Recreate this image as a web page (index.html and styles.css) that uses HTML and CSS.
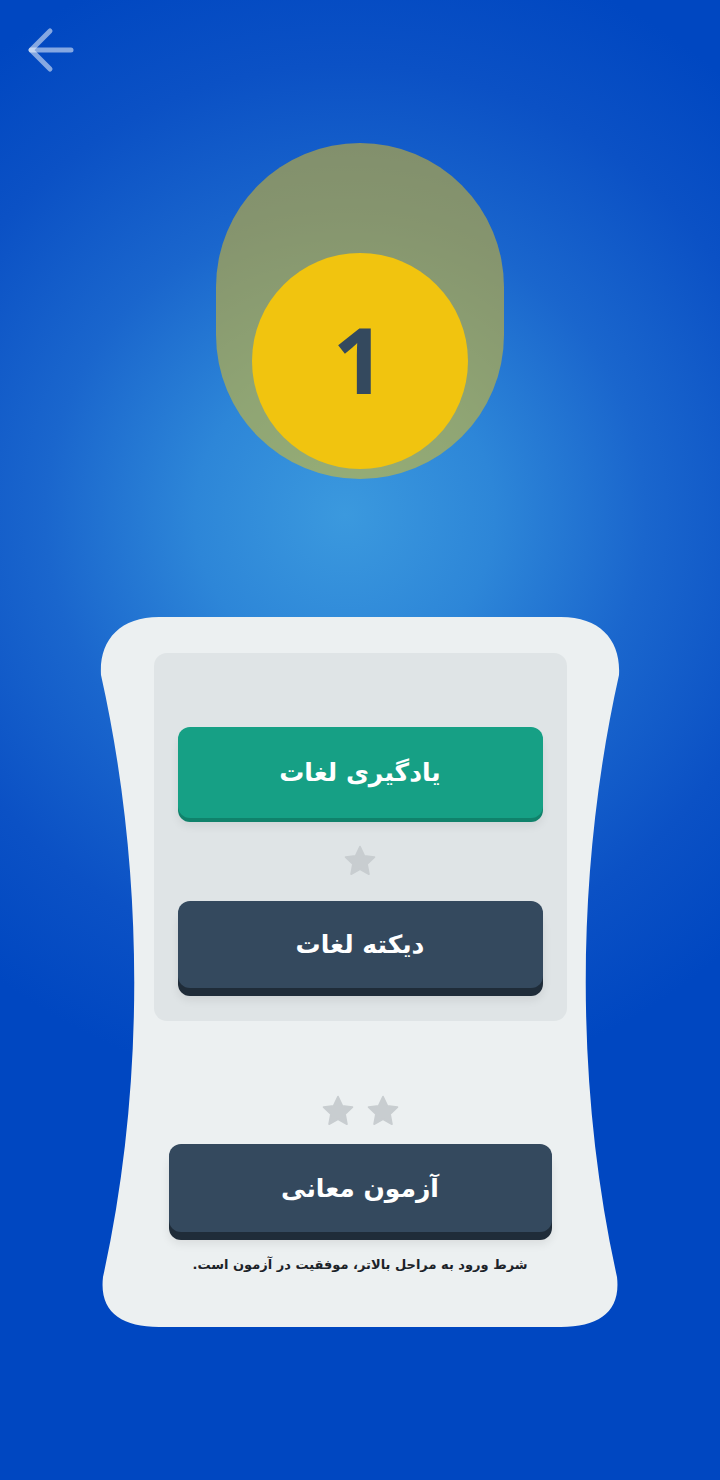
FILE: index.html
```html
<!DOCTYPE html>
<html lang="fa">
<head>
<meta charset="utf-8">
<title>مرحله ۱</title>
<link rel="stylesheet" href="styles.css">
</head>
<body>
<div class="screen">
  <header class="topbar">
    <button class="back" aria-label="بازگشت">
      <svg width="48" height="48" viewBox="0 0 48 48" fill="none" stroke="currentColor" stroke-width="5" stroke-linecap="round" stroke-linejoin="round">
        <path d="M5 24 H45"/>
        <path d="M24 5 L5 24 L24 43"/>
      </svg>
    </button>
  </header>

  <section class="badge">
    <div class="badge-disc">
      <span class="badge-num">1</span>
    </div>
  </section>

  <section class="card">
    <svg class="card-shape" width="518" height="710" viewBox="0 0 518 710" aria-hidden="true">
      <path d="M58 0 L460 0 C500 0 520 24 518 58 C474 255 474 470 516 660 C520 695 498 710 460 710 L58 710 C20 710 -2 695 2 660 C44 470 44 255 0 58 C-2 24 18 0 58 0 Z" fill="#ecf0f1"/>
    </svg>
    <div class="card-body">
      <div class="panel">
        <button class="btn btn-green">یادگیری لغات</button>
        <div class="stars stars-one">
          <svg class="star" viewBox="0 0 24 24"><path d="M12 1.8l3.1 6.6 7.1.9-5.2 4.9 1.3 7.1L12 17.8l-6.3 3.5 1.3-7.1L1.8 9.3l7.1-.9z" stroke="#c8cdd0" stroke-width="1.2" stroke-linejoin="round"/></svg>
        </div>
        <button class="btn btn-dark btn-dictation">دیکته لغات</button>
      </div>
      <div class="stars stars-two">
        <svg class="star" viewBox="0 0 24 24"><path d="M12 1.8l3.1 6.6 7.1.9-5.2 4.9 1.3 7.1L12 17.8l-6.3 3.5 1.3-7.1L1.8 9.3l7.1-.9z" stroke="#c8cdd0" stroke-width="1.2" stroke-linejoin="round"/></svg>
        <svg class="star" viewBox="0 0 24 24"><path d="M12 1.8l3.1 6.6 7.1.9-5.2 4.9 1.3 7.1L12 17.8l-6.3 3.5 1.3-7.1L1.8 9.3l7.1-.9z" stroke="#c8cdd0" stroke-width="1.2" stroke-linejoin="round"/></svg>
      </div>
      <button class="btn btn-dark btn-exam">آزمون معانی</button>
      <p class="note">شرط ورود به مراحل بالاتر، موفقیت در آزمون است.</p>
    </div>
  </section>
</div>
</body>
</html>
```

FILE: styles.css
```css
html, body {
  margin: 0;
  padding: 0;
}

body {
  width: 720px;
  height: 1480px;
  overflow: hidden;
  background: radial-gradient(circle at 345px 515px,
    #3b99de 0px,
    #2d86d8 150px,
    #1a66cd 300px,
    #0b51c5 450px,
    #0047c1 580px);
  font-family: "DejaVu Sans", "Noto Sans", sans-serif;
}

.screen {
  display: flex;
  flex-direction: column;
  align-items: center;
  width: 720px;
  height: 1480px;
}

.topbar {
  align-self: stretch;
  display: flex;
  padding: 26px 0 0 26px;
}

.back {
  display: flex;
  padding: 0;
  border: 0;
  background: none;
  color: rgba(255, 255, 255, 0.52);
  cursor: pointer;
}

.badge {
  margin-top: 69px;
}

.badge-disc {
  width: 288px;
  height: 336px;
  border-radius: 144px;
  background: rgba(241, 196, 15, 0.5);
  display: flex;
  align-items: flex-end;
  justify-content: center;
  padding-bottom: 10px;
  box-sizing: border-box;
}

.badge-num {
  width: 216px;
  height: 216px;
  border-radius: 50%;
  background: #f1c40f;
  display: flex;
  align-items: center;
  justify-content: center;
  font-family: "Noto Sans", "DejaVu Sans", sans-serif;
  font-weight: 700;
  font-size: 92px;
  line-height: 1;
  color: #34495e;
  padding: 0 2px 4px 0;
  box-sizing: border-box;
}

.card {
  position: relative;
  margin-top: 138px;
  width: 518px;
  height: 710px;
}

.card-shape {
  position: absolute;
  left: 0;
  top: 0;
  overflow: visible;
}

.card-body {
  position: relative;
  display: flex;
  flex-direction: column;
  align-items: center;
  padding-top: 36px;
}

.panel {
  width: 413px;
  height: 368px;
  box-sizing: border-box;
  background: #dfe4e6;
  border-radius: 13px;
  padding: 74px 24px 0;
  display: flex;
  flex-direction: column;
  align-items: stretch;
}

.btn {
  display: flex;
  align-items: center;
  justify-content: center;
  border: 0;
  border-radius: 12px;
  color: #ffffff;
  font-family: "DejaVu Sans", "Noto Sans", sans-serif;
  font-weight: 700;
  font-size: 25px;
  padding: 0;
  cursor: pointer;
}

.btn-green {
  height: 91px;
  background: #16a085;
  box-shadow: 0 4px 0 #10826b, 0 8px 10px rgba(0, 0, 0, 0.07);
}

.btn-dark {
  background: #34495e;
  box-shadow: 0 8px 0 #1f2c39, 0 12px 10px rgba(0, 0, 0, 0.08);
}

.btn-dictation {
  height: 87px;
}

.stars {
  display: flex;
  justify-content: center;
  gap: 11px;
}

.stars-one {
  margin: 26px 0 23px;
}

.stars-two {
  margin-top: 73px;
}

.star {
  width: 34px;
  height: 34px;
  fill: #c8cdd0;
}

.btn-exam {
  width: 383px;
  height: 88px;
  margin-top: 16px;
}

.note {
  margin: 23px 0 0;
  font-family: "DejaVu Sans", "Noto Sans", sans-serif;
  font-weight: 700;
  font-size: 13px;
  line-height: 20px;
  color: #1c2329;
  direction: rtl;
}
```
